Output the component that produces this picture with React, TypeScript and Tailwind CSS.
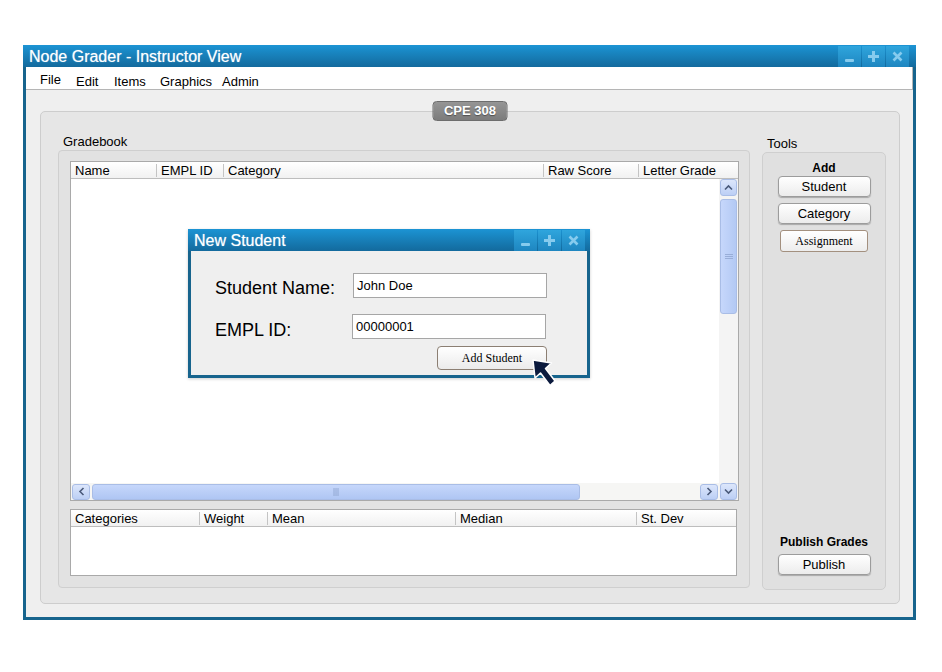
const font = { fontFamily: '"Liberation Sans", Arial, sans-serif' };
const serif = { fontFamily: '"Liberation Serif", "Times New Roman", serif' };

const WinButtons = () => (
  <div className="flex h-full gap-px">
    <div className="w-[23px] h-full bg-gradient-to-b from-[#2fa5dd] to-[#1e86c0] flex items-end justify-center pb-[5px]">
      <div className="w-[9px] h-[3px] bg-[#86cbee] rounded-[1px]" />
    </div>
    <div className="w-[23px] h-full bg-gradient-to-b from-[#2fa5dd] to-[#1e86c0] flex items-center justify-center">
      <svg width="11" height="11" viewBox="0 0 11 11">
        <path d="M4 0h3v4h4v3H7v4H4V7H0V4h4z" fill="#86cbee" />
      </svg>
    </div>
    <div className="w-[23px] h-full bg-gradient-to-b from-[#2fa5dd] to-[#1e86c0] flex items-center justify-center">
      <svg width="11" height="11" viewBox="0 0 11 11">
        <path d="M1.5 1.5l8 8M9.5 1.5l-8 8" stroke="#86cbee" strokeWidth="2.6" />
      </svg>
    </div>
  </div>
);

const HeaderCell = ({ label, w, first }: { label: string; w: string; first?: boolean }) => (
  <div className={`${w} h-full flex items-center`}>
    {!first && <div className="w-px h-[13px] bg-[#c4c4c4] mr-[4px]" />}
    <span className={first ? "pl-[4px]" : ""}>{label}</span>
  </div>
);

const ToolButton = ({ label }: { label: string }) => (
  <div className="w-[93px] h-[21px] rounded-[4px] border border-[#9c9c9c] bg-gradient-to-b from-white to-[#ececec] shadow-[0_1px_1px_rgba(0,0,0,0.25)] flex items-center justify-center text-[13px] text-black">
    {label}
  </div>
);

const App = () => {
  return (
    <div className="relative w-[942px] h-[672px] bg-white pt-[45px] pl-[23px]" style={font}>
      <div className="w-[893px] h-[575px] bg-[#17648d] flex flex-col">
        {/* title bar */}
        <div className="h-[22px] flex items-stretch bg-gradient-to-b from-[#1c94d4] to-[#136a9d]">
          <div className="flex-1 pl-[6px] pt-[2px] text-white text-[16px] leading-[19px] [text-shadow:0_0_1px_rgba(255,255,255,0.6)]">
            Node Grader - Instructor View
          </div>
          <div className="mr-[7px] pt-[1px]">
            <WinButtons />
          </div>
        </div>

        <div className="mx-[3px] mb-[3px] flex-1 flex flex-col bg-[#efefef]">
          {/* menu */}
          <div className="h-[23px] bg-white border-b border-r border-[#b5b5b5] flex items-start pl-[14px] text-[13px] text-black">
            <div className="w-[36px] pt-[3px]">File</div>
            <div className="w-[38px] pt-[5px]">Edit</div>
            <div className="w-[46px] pt-[5px]">Items</div>
            <div className="w-[62px] pt-[5px]">Graphics</div>
            <div className="pt-[5px]">Admin</div>
          </div>

          {/* main panel */}
          <div className="relative ml-[14px] mt-[21px] w-[860px] h-[493px] bg-[#e6e6e6] border border-[#cdcdcd] rounded-[5px] flex pl-[17px] gap-[12px]">
            <div className="absolute left-1/2 -translate-x-1/2 top-[-11px] w-[75px] h-[20px] rounded-[4px] border border-[#6d6d6d] bg-gradient-to-b from-[#959595] to-[#7c7c7c] flex items-center justify-center text-white text-[13px] font-bold [text-shadow:0_1px_1px_rgba(0,0,0,0.4)]">
              CPE 308
            </div>

            {/* gradebook */}
            <div className="w-[692px] flex flex-col pt-[22px]">
              <div className="h-[16px] pl-[5px] text-[13px] leading-[16px] text-black">Gradebook</div>
              <div className="h-[438px] bg-[#e2e2e2] border border-[#cfcfcf] rounded-[4px] pl-[11px] pt-[10px] flex flex-col gap-[8px]">
                {/* main table */}
                <div className="w-[669px] h-[340px] bg-white border border-[#a9a9a9] flex flex-col text-[13px] text-black">
                  <div className="h-[17px] flex border-b border-[#bdbdbd] bg-gradient-to-b from-white to-[#f1f1f1] leading-[15px]">
                    <HeaderCell label="Name" w="w-[85px]" first />
                    <HeaderCell label="EMPL ID" w="w-[67px]" />
                    <HeaderCell label="Category" w="w-[320px]" />
                    <HeaderCell label="Raw Score" w="w-[95px]" />
                    <HeaderCell label="Letter Grade" w="flex-1" />
                  </div>
                  <div className="flex-1 flex">
                    <div className="flex-1 flex flex-col">
                      <div className="flex-1 bg-white" />
                      <div className="h-[17px] bg-[#f6f6f4] flex items-center pl-[1px] pr-[1px] gap-[2px]">
                        <div className="w-[18px] h-[16px] rounded-[3px] border border-[#a9bde6] bg-gradient-to-b from-[#dce6fb] to-[#bccff5] flex items-center justify-center">
                          <svg width="7" height="9" viewBox="0 0 7 9"><path d="M5.5 1L2 4.5 5.5 8" stroke="#4a5a7a" strokeWidth="1.6" fill="none" /></svg>
                        </div>
                        <div className="w-[488px] h-[16px] rounded-[3px] border border-[#a9bde6] bg-gradient-to-b from-[#c6d7fb] to-[#afc6f3] flex items-center justify-center">
                          <svg width="7" height="8" viewBox="0 0 7 8"><path d="M1 0v8M3 0v8M5 0v8" stroke="#8fa5cf" strokeWidth="0.9" /></svg>
                        </div>
                        <div className="flex-1" />
                        <div className="w-[18px] h-[16px] rounded-[3px] border border-[#a9bde6] bg-gradient-to-b from-[#dce6fb] to-[#bccff5] flex items-center justify-center">
                          <svg width="7" height="9" viewBox="0 0 7 9"><path d="M1.5 1L5 4.5 1.5 8" stroke="#4a5a7a" strokeWidth="1.6" fill="none" /></svg>
                        </div>
                      </div>
                    </div>
                    <div className="w-[19px] bg-[#f4f4f4] flex flex-col items-center">
                      <div className="w-[17px] h-[17px] rounded-[3px] border border-[#a9bde6] bg-gradient-to-b from-[#dce6fb] to-[#bccff5] flex items-center justify-center">
                        <svg width="9" height="7" viewBox="0 0 9 7"><path d="M1 5.5L4.5 2 8 5.5" stroke="#4a5a7a" strokeWidth="1.6" fill="none" /></svg>
                      </div>
                      <div className="mt-[3px] w-[17px] h-[115px] rounded-[3px] border border-[#a9bde6] bg-gradient-to-r from-[#c6d7fb] to-[#b3c9f4] flex items-center justify-center">
                        <svg width="8" height="7" viewBox="0 0 8 7"><path d="M0 1.5h8M0 3.5h8M0 5.5h8" stroke="#8fa5cf" strokeWidth="0.8" /></svg>
                      </div>
                      <div className="flex-1" />
                      <div className="w-[17px] h-[17px] rounded-[3px] border border-[#a9bde6] bg-gradient-to-b from-[#dce6fb] to-[#bccff5] flex items-center justify-center">
                        <svg width="9" height="7" viewBox="0 0 9 7"><path d="M1 1.5L4.5 5 8 1.5" stroke="#4a5a7a" strokeWidth="1.6" fill="none" /></svg>
                      </div>
                    </div>
                  </div>
                </div>

                {/* stats table */}
                <div className="w-[667px] h-[67px] bg-white border border-[#a9a9a9] flex flex-col text-[13px] text-black">
                  <div className="h-[17px] flex border-b border-[#bdbdbd] bg-gradient-to-b from-white to-[#f1f1f1] leading-[15px]">
                    <HeaderCell label="Categories" w="w-[128px]" first />
                    <HeaderCell label="Weight" w="w-[68px]" />
                    <HeaderCell label="Mean" w="w-[188px]" />
                    <HeaderCell label="Median" w="w-[181px]" />
                    <HeaderCell label="St. Dev" w="flex-1" />
                  </div>
                </div>
              </div>
            </div>

            {/* tools */}
            <div className="w-[124px] flex flex-col pt-[24px]">
              <div className="h-[16px] pl-[5px] text-[13px] leading-[16px] text-black">Tools</div>
              <div className="h-[438px] bg-[#e0e0e0] border border-[#cfcfcf] rounded-[5px] flex flex-col items-center pt-[8px] pb-[13px]">
                <div className="text-[12px] font-bold leading-[14px] text-black">Add</div>
                <div className="mt-[1px] flex flex-col items-center gap-[6px]">
                  <ToolButton label="Student" />
                  <ToolButton label="Category" />
                  <div className="w-[88px] h-[22px] rounded-[3px] border border-[#a3907f] bg-gradient-to-b from-white to-[#ededed] flex items-center justify-center text-[12px] text-black" style={serif}>
                    Assignment
                  </div>
                </div>
                <div className="flex-1" />
                <div className="text-[12px] font-bold leading-[14px] text-black">Publish Grades</div>
                <div className="mt-[5px] mb-[1px]">
                  <ToolButton label="Publish" />
                </div>
              </div>
            </div>
          </div>
        </div>
      </div>

      {/* dialog */}
      <div className="absolute left-[188px] top-[229px] w-[402px] h-[149px] bg-[#17648d] flex flex-col overflow-hidden shadow-[0_1px_3px_rgba(0,0,0,0.2)]">
        <div className="h-[22px] shrink-0 flex items-stretch bg-gradient-to-b from-[#1c94d4] to-[#136a9d]">
          <div className="flex-1 pl-[6px] pt-[2px] text-white text-[16px] leading-[19px] [text-shadow:0_0_1px_rgba(255,255,255,0.6)]">New Student</div>
          <div className="mr-[5px] pt-[1px]">
            <WinButtons />
          </div>
        </div>
        <div className="mx-[3px] mb-[3px] flex-1 bg-[#efefef] pl-[24px] pt-[22px] text-black">
          <div className="h-[25px] flex items-center">
            <div className="w-[138px] text-[18px] leading-[20px] pt-[4px]">Student Name:</div>
            <div className="w-[194px] h-[25px] bg-white border border-[#a6a6a6] pl-[3px] flex items-center text-[13px]">John Doe</div>
          </div>
          <div className="h-[25px] flex items-center mt-[16px]">
            <div className="w-[137px] text-[18px] leading-[20px] pt-[6px]">EMPL ID:</div>
            <div className="w-[194px] h-[25px] bg-white border border-[#a6a6a6] pl-[3px] flex items-center text-[13px]">00000001</div>
          </div>
          <div className="mt-[7px] ml-[222px] w-[110px] h-[24px] rounded-[4px] border border-[#8c7f73] bg-gradient-to-b from-white to-[#ebebeb] flex items-center justify-center text-[12px]" style={serif}>
            Add Student
          </div>
        </div>
      </div>

      {/* cursor */}
      <svg className="absolute left-[530px] top-[357px]" width="30" height="32" viewBox="0 0 30 32">
        <path d="M3 3L5 21L10.5 16L20 28.5L25 24L15.5 11.5L21.5 6Z" fill="#0b1a3d" stroke="#ffffff" strokeWidth="1.5" strokeLinejoin="round" />
      </svg>
    </div>
  );
};

export default App;
